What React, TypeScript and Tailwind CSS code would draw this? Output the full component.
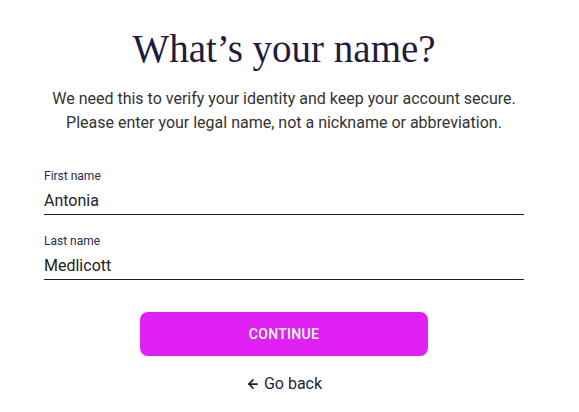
import { ArrowLeft } from "lucide-react";

export default function App() {
  return (
    <div
      className="min-h-screen bg-white"
      style={{ fontFamily: "Roboto, 'Noto Sans', sans-serif" }}
    >
      <div className="ml-[44px] w-[480px] flex flex-col items-center pt-[24px]">
        <h1
          className="text-[39px] leading-[50px] text-[#1f1d3d] font-light"
          style={{ fontFamily: "'Liberation Serif', 'DejaVu Serif', serif" }}
        >
          What’s your name?
        </h1>
        <p className="mt-[13px] whitespace-nowrap text-center text-[16px] leading-[24px] text-[#333]">
          We need this to verify your identity and keep your account secure.
          <br />
          Please enter your legal name, not a nickname or abbreviation.
        </p>

        <div className="w-full mt-[33px] flex flex-col gap-[18px]">
          <div className="flex flex-col border-b border-[#1f1d3d]">
            <label className="text-[12px] leading-[16px] text-[#2a2850]">First name</label>
            <input
              defaultValue="Antonia"
              className="h-[30px] pt-[2px] text-[16px] text-[#222] outline-none bg-transparent"
            />
          </div>
          <div className="flex flex-col border-b border-[#1f1d3d]">
            <label className="text-[12px] leading-[16px] text-[#2a2850]">Last name</label>
            <input
              defaultValue="Medlicott"
              className="h-[30px] pt-[2px] text-[16px] text-[#222] outline-none bg-transparent"
            />
          </div>
        </div>

        <button className="mt-[32px] w-[288px] h-[44px] rounded-[8px] bg-[#e020f4] text-white text-[14px] font-medium tracking-[0.3px]">
          CONTINUE
        </button>

        <button className="mt-[16px] flex items-center gap-[4px] text-[16px] text-[#1f1d3d]">
          <ArrowLeft className="w-[14px] h-[14px]" strokeWidth={3} />
          Go back
        </button>
      </div>
    </div>
  );
}
